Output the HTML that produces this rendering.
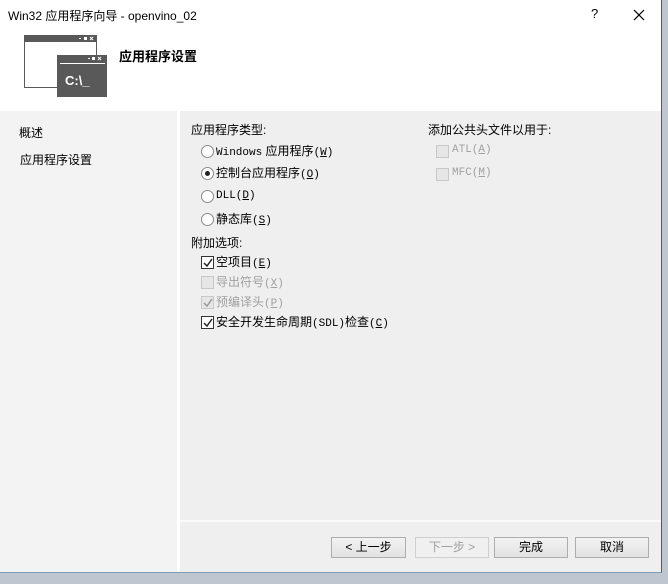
<!DOCTYPE html>
<html><head><meta charset="utf-8"><style>
body{margin:0;width:668px;height:584px;background:#bfc6cf;position:relative;overflow:hidden;font-family:"Liberation Sans","Noto Sans CJK SC",sans-serif;font-size:12px;color:#000}
.win{position:absolute;left:0;top:0;width:661px;height:572px;background:#fff;border-right:1px solid #4a5a70;border-bottom:1px solid #7f9db9}
.a{position:absolute;white-space:nowrap}
.left{position:absolute;left:0;top:111px;width:177px;height:461px;background:#f3f3f3}
.right{position:absolute;left:180px;top:111px;width:481px;height:461px;background:#efefef}
.hl{position:absolute;left:180px;top:520px;width:481px;height:2px;background:#fafafa}
.rad{position:absolute;width:11px;height:11px;border:1px solid #8a8a8a;border-radius:50%;background:#fff}
.chk{position:absolute;width:11px;height:11px;border:1px solid #333;background:#fff}
.chk.d{border-color:#c8c8c8;background:#e6e6e6}
.btn{position:absolute;top:537px;height:19px;border:1px solid #adadad;background:linear-gradient(#f2f2f2,#e2e2e2);text-align:center;line-height:19px;font-size:12px}
.mono{font-family:"Liberation Mono","Noto Sans CJK SC",monospace;font-size:11px}
.g{color:#a0a0a0}
</style></head><body>
<div class="win">
<div class="a" style="left:8px;top:7px;font-size:12px;color:#000">Win32 应用程序向导 - openvino_02</div>
<div class="a" style="left:591px;top:6px;font-size:13px">?</div>
<svg class="a" style="left:633px;top:9px" width="12" height="12"><path d="M1 1L11 11M11 1L1 11" stroke="#000" stroke-width="1.2"/></svg>
<svg class="a" style="left:24px;top:35px" width="84" height="62">
<rect x="0.5" y="0.5" width="72" height="52" fill="#fff" stroke="#595959"/>
<rect x="0" y="0" width="73" height="7" fill="#595959"/>
<rect x="33" y="20" width="50" height="42" fill="#595959"/>
<rect x="36" y="28" width="45" height="1" fill="#fff"/>
<rect x="55" y="3" width="2" height="1" fill="#fff"/><rect x="60" y="2" width="3" height="3" fill="#fff"/><path d="M66 2l3 3M69 2l-3 3" stroke="#fff"/>
<rect x="64" y="23" width="2" height="1" fill="#fff"/><rect x="68" y="22" width="3" height="3" fill="#fff"/><path d="M74 22l3 3M77 22l-3 3" stroke="#fff"/>
<text x="41" y="50" fill="#fff" font-family="Liberation Sans" font-weight="bold" font-size="13">C:\_</text>
</svg>
<div class="a" style="left:119px;top:46px;font-size:13px;font-weight:bold">应用程序设置</div>
<div class="left"></div><div class="right"></div><div class="hl"></div>
<div class="a" style="left:19px;top:124px">概述</div>
<div class="a" style="left:20px;top:151px">应用程序设置</div>
<div class="a" style="left:191px;top:121px">应用程序类型:</div>
<div class="rad" style="left:201px;top:145px"></div><div class="a" style="left:216px;top:142px"><span class="mono">Windows</span> 应用程序<span class="mono">(<u>W</u>)</span></div>
<div class="rad" style="left:201px;top:167px"></div><div style="position:absolute;left:205px;top:171px;width:5px;height:5px;border-radius:50%;background:#222"></div><div class="a" style="left:216px;top:164px">控制台应用程序<span class="mono">(<u>O</u>)</span></div>
<div class="rad" style="left:201px;top:190px"></div><div class="a" style="left:216px;top:187px"><span class="mono">DLL(<u>D</u>)</span></div>
<div class="rad" style="left:201px;top:213px"></div><div class="a" style="left:216px;top:210px">静态库<span class="mono">(<u>S</u>)</span></div>
<div class="a" style="left:191px;top:234px">附加选项:</div>
<div class="chk" style="left:201px;top:256px"></div><svg class="a" style="left:203px;top:258px" width="10" height="10"><path d="M1 5l3 3 5-7" stroke="#222" stroke-width="1.5" fill="none"/></svg><div class="a" style="left:216px;top:253px">空项目<span class="mono">(<u>E</u>)</span></div>
<div class="chk d" style="left:201px;top:276px"></div><div class="a g" style="left:216px;top:273px">导出符号<span class="mono">(<u>X</u>)</span></div>
<div class="chk d" style="left:201px;top:296px"></div><svg class="a" style="left:203px;top:298px" width="10" height="10"><path d="M1 5l3 3 5-7" stroke="#999" stroke-width="1.5" fill="none"/></svg><div class="a g" style="left:216px;top:293px">预编译头<span class="mono">(<u>P</u>)</span></div>
<div class="chk" style="left:201px;top:316px"></div><svg class="a" style="left:203px;top:318px" width="10" height="10"><path d="M1 5l3 3 5-7" stroke="#222" stroke-width="1.5" fill="none"/></svg><div class="a" style="left:216px;top:313px">安全开发生命周期<span class="mono">(SDL)</span>检查<span class="mono">(<u>C</u>)</span></div>
<div class="a" style="left:428px;top:121px">添加公共头文件以用于:</div>
<div class="chk d" style="left:436px;top:145px"></div><div class="a g mono" style="left:452px;top:144px">ATL(<u>A</u>)</div>
<div class="chk d" style="left:436px;top:168px"></div><div class="a g mono" style="left:452px;top:167px">MFC(<u>M</u>)</div>
<div class="btn" style="left:331px;width:73px">&lt; 上一步</div>
<div class="btn g" style="left:415px;width:72px;border-color:#cfcfcf;background:#f0f0f0">下一步 &gt;</div>
<div class="btn" style="left:494px;width:72px">完成</div>
<div class="btn" style="left:575px;width:72px">取消</div>
</div>
</body></html>
